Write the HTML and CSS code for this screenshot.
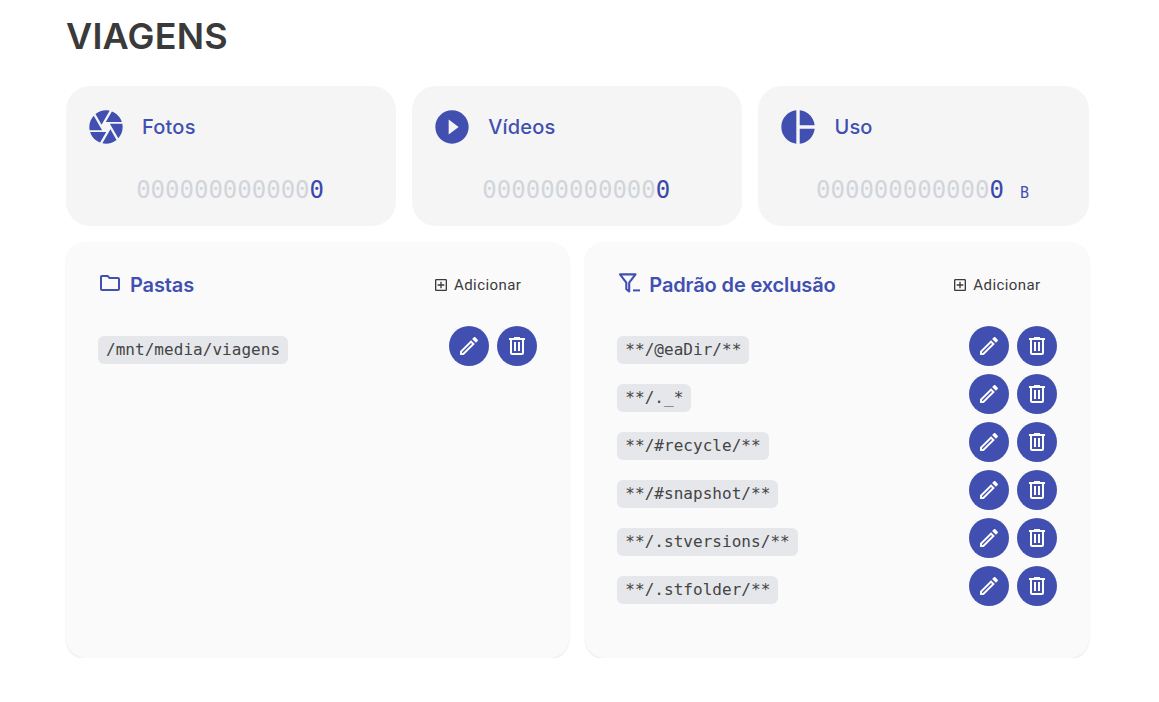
FILE: index.html
```html
<!DOCTYPE html>
<html lang="pt">
<head>
<meta charset="utf-8">
<title>Viagens</title>
<link rel="stylesheet" href="styles.css">
</head>
<body>
<svg class="sprite" aria-hidden="true">
  <symbol id="pencil" viewBox="0 0 24 24"><path d="M14.06 9l.94.94L5.92 19H5v-.92L14.06 9M17.66 3c-.25 0-.51.1-.7.29l-1.83 1.83 3.75 3.75 1.83-1.83c.39-.39.39-1.04 0-1.41l-2.34-2.34c-.2-.2-.45-.29-.71-.29M14.06 6.19L3 17.25V21h3.75L17.81 9.94l-3.75-3.75z"/></symbol>
  <symbol id="trash" viewBox="0 0 24 24"><path d="M9 3v1H4v2h1v13a2 2 0 0 0 2 2h10a2 2 0 0 0 2-2V6h1V4h-5V3H9M7 6h10v13H7V6m2 2v9h2V8H9m4 0v9h2V8h-2z"/></symbol>
  <symbol id="plusbox" viewBox="0 0 24 24"><path d="M19 3H5c-1.1 0-2 .9-2 2v14c0 1.1.9 2 2 2h14c1.1 0 2-.9 2-2V5c0-1.1-.9-2-2-2zm0 16H5V5h14v14zM11 17h2v-4h4v-2h-4V7h-2v4H7v2h4z"/></symbol>
</svg>
<main class="page">
  <h1 class="title">VIAGENS</h1>
  <section class="stats">
    <div class="stat">
      <div class="stat-head">
        <svg class="stat-icon" viewBox="0 0 24 24"><path d="M9.4 10.5l4.77-8.26C13.47 2.09 12.75 2 12 2c-2.4 0-4.6.85-6.32 2.25l3.66 6.35.06-.1zM21.54 9c-.92-2.92-3.15-5.26-6-6.34L11.88 9h9.66zm.26 1h-7.49l.29.5 4.76 8.25C21 16.97 22 14.61 22 12c0-.69-.07-1.35-.2-2zM8.54 12l-3.9-6.75C3.01 7.03 2 9.39 2 12c0 .69.07 1.35.2 2h7.49l-1.15-2zm-6.08 3c.92 2.92 3.15 5.26 6 6.34L12.12 15H2.46zm11.27 0l-3.9 6.76c.7.15 1.42.24 2.17.24 2.4 0 4.6-.85 6.32-2.25l-3.66-6.35-.93 1.6z"/></svg>
        <span class="stat-label">Fotos</span>
      </div>
      <div class="stat-value"><span class="dim">000000000000</span><span class="num">0</span></div>
    </div>
    <div class="stat">
      <div class="stat-head">
        <svg class="stat-icon" viewBox="0 0 24 24"><path d="M12 2C6.48 2 2 6.48 2 12s4.48 10 10 10 10-4.48 10-10S17.52 2 12 2zm-2 14.5v-9l6 4.5-6 4.5z"/></svg>
        <span class="stat-label">Vídeos</span>
      </div>
      <div class="stat-value"><span class="dim">000000000000</span><span class="num">0</span></div>
    </div>
    <div class="stat">
      <div class="stat-head">
        <svg class="stat-icon" viewBox="0 0 24 24"><path d="M11 2v20c-5.07-.5-9-4.79-9-10s3.93-9.5 9-10zm2.03 0v8.99H22c-.47-4.74-4.25-8.52-8.97-8.99zm0 11.01V22c4.74-.47 8.5-4.25 8.97-8.99h-8.97z"/></svg>
        <span class="stat-label">Uso</span>
      </div>
      <div class="stat-value"><span class="dim">000000000000</span><span class="num">0</span><span class="unit">B</span></div>
    </div>
  </section>

  <section class="panels">
    <div class="panel">
      <div class="panel-head">
        <h2 class="panel-title">
          <svg class="head-icon" viewBox="0 0 24 24"><path d="M20 6h-8l-2-2H4c-1.1 0-1.99.9-1.99 2L2 18c0 1.1.9 2 2 2h16c1.1 0 2-.9 2-2V8c0-1.1-.9-2-2-2zm0 12H4V6h5.17l2 2H20v10z"/></svg>
          <span>Pastas</span>
        </h2>
        <button class="add"><svg class="add-icon"><use href="#plusbox"/></svg>Adicionar</button>
      </div>
      <ul class="rows">
        <li class="row">
          <code class="chip">/mnt/media/viagens</code>
          <div class="actions">
            <button class="round"><svg><use href="#pencil"/></svg></button>
            <button class="round"><svg><use href="#trash"/></svg></button>
          </div>
        </li>
      </ul>
    </div>

    <div class="panel">
      <div class="panel-head">
        <h2 class="panel-title">
          <svg class="head-icon" viewBox="0 0 24 24"><path class="funnel" d="M3 3.4h15.5l-6.3 8.2v8.8l-2.9-2.3v-6.5z"/><path d="M16 18.4h7v2h-7z"/></svg>
          <span>Padrão de exclusão</span>
        </h2>
        <button class="add"><svg class="add-icon"><use href="#plusbox"/></svg>Adicionar</button>
      </div>
      <ul class="rows">
        <li class="row">
          <code class="chip">**/@eaDir/**</code>
          <div class="actions">
            <button class="round"><svg><use href="#pencil"/></svg></button>
            <button class="round"><svg><use href="#trash"/></svg></button>
          </div>
        </li>
        <li class="row">
          <code class="chip">**/._*</code>
          <div class="actions">
            <button class="round"><svg><use href="#pencil"/></svg></button>
            <button class="round"><svg><use href="#trash"/></svg></button>
          </div>
        </li>
        <li class="row">
          <code class="chip">**/#recycle/**</code>
          <div class="actions">
            <button class="round"><svg><use href="#pencil"/></svg></button>
            <button class="round"><svg><use href="#trash"/></svg></button>
          </div>
        </li>
        <li class="row">
          <code class="chip">**/#snapshot/**</code>
          <div class="actions">
            <button class="round"><svg><use href="#pencil"/></svg></button>
            <button class="round"><svg><use href="#trash"/></svg></button>
          </div>
        </li>
        <li class="row">
          <code class="chip">**/.stversions/**</code>
          <div class="actions">
            <button class="round"><svg><use href="#pencil"/></svg></button>
            <button class="round"><svg><use href="#trash"/></svg></button>
          </div>
        </li>
        <li class="row">
          <code class="chip">**/.stfolder/**</code>
          <div class="actions">
            <button class="round"><svg><use href="#pencil"/></svg></button>
            <button class="round"><svg><use href="#trash"/></svg></button>
          </div>
        </li>
      </ul>
    </div>
  </section>
</main>
</body>
</html>
```
FILE: styles.css
```css
* { box-sizing: border-box; }
html, body { margin: 0; background: #fff; }
body { font-family: "Inter", "Roboto", sans-serif; color: #3f3f3f; }
.sprite { display: none; }
.page { width: 1022.6px; margin-left: 66px; padding-top: 11px; }
.title { margin: 0 0 25px; height: 50px; font-size: 36px; line-height: 50px; font-weight: 600; letter-spacing: 0.2px; color: #3a3a3a; }
.stats { display: grid; grid-template-columns: repeat(3, 1fr); gap: 16px; }
.stat { height: 140px; background: #f5f5f5; border-radius: 24px; padding: 21px 20px 0; }
.stat-head { display: flex; align-items: center; gap: 16px; height: 40px; }
.stat-icon { width: 40px; height: 40px; fill: #4150b0; flex: none; }
.stat-label { font-size: 20px; font-weight: 500; color: #4150b0; letter-spacing: 0.2px; }
.stat-value { margin-top: 25px; height: 36px; padding-right: 2px; text-align: center; font-family: "DejaVu Sans Mono", monospace; font-size: 24px; line-height: 36px; }
.dim { color: #d1d5db; }
.num { color: #3949ab; }
.unit { margin-left: 16px; font-size: 15px; color: #4150b0; }
.panels { display: grid; grid-template-columns: repeat(2, 1fr); gap: 16px; margin-top: 16px; }
.panel { height: 416px; background: #fafafa; border-radius: 20px; box-shadow: 0 1px 2px rgba(0, 0, 0, 0.1); padding: 24px 32px; }
.panel-head { display: flex; align-items: center; justify-content: space-between; height: 38px; margin-bottom: 22px; }
.panel-title { display: flex; align-items: center; gap: 8px; margin: 0; font-size: 20px; font-weight: 600; color: #4150b0; letter-spacing: -0.13px; }
.head-icon { width: 24px; height: 24px; fill: #4150b0; flex: none; margin-top: -5px; }
.funnel { fill: none; stroke: #4150b0; stroke-width: 2.1; stroke-linejoin: round; }
.add { display: flex; align-items: center; gap: 5px; border: 0; background: none; padding: 0 16px; font-family: "Roboto", sans-serif; font-size: 15px; letter-spacing: 0.42px; color: #3a3a3a; }
.add-icon { width: 16px; height: 16px; fill: #3a3a3a; }
.rows { list-style: none; margin: 0; padding: 0; display: flex; flex-direction: column; gap: 8px; }
.row { display: flex; justify-content: space-between; height: 40px; }
.chip { align-self: flex-end; height: 28px; margin-bottom: 2px; padding: 0 8px; background: #e5e7eb; border-radius: 6px; font-family: "DejaVu Sans Mono", monospace; font-size: 16px; letter-spacing: 0.04px; line-height: 28px; color: #444; }
.actions { display: flex; gap: 8px; }
.round { width: 40px; height: 40px; padding: 8px; border: 0; border-radius: 50%; background: #4150b0; }
.round svg { display: block; width: 24px; height: 24px; fill: #fff; }
```
